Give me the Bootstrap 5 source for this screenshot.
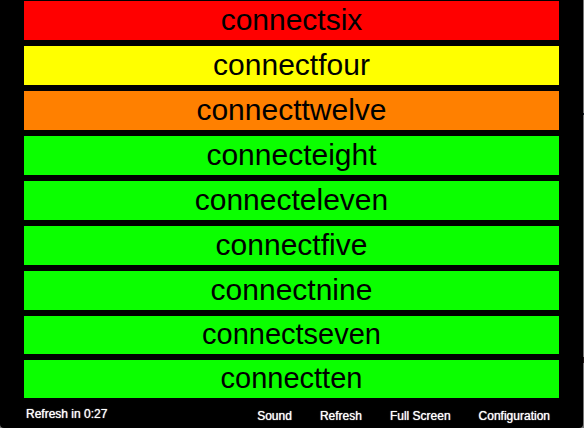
<!DOCTYPE html>
<html lang="en">
<head>
<meta charset="utf-8">
<meta name="viewport" content="width=device-width, initial-scale=1">
<title>Build monitor</title>
<link href="https://cdn.jsdelivr.net/npm/bootstrap@5.3.0/dist/css/bootstrap.min.css" rel="stylesheet">
<style>
  body {
    font-family: "Liberation Sans", Arial, Helvetica, sans-serif;
    background: linear-gradient(#777 113px, #101820 113px, #101820 115px, #777 115px, #777 357px, #201818 357px, #201818 363px, #777 363px);
    min-height: 100vh;
    padding-right: 1px;
  }
  .monitor {
    background: #000;
    min-height: 100vh;
    padding: 1px 24px 0;
    border-radius: 0 0 4px 4px;
  }
  .builds {
    display: grid;
    grid-template-rows: repeat(7, 39px) repeat(2, 38px);
    gap: 6px;
  }
  .builds li {
    font-size: 30px;
    line-height: 37px;
    color: #000;
    background: #0bff00;
  }
  .builds li:nth-child(n+8) { font-size: 29px; }
  .builds .failed { background: #f00; }
  .builds .unstable { background: #ff0; }
  .builds .building { background: #ff8000; }
  .toolbar {
    font-size: 12px;
    line-height: 16px;
    padding: 8px 9px 0 2px;
    text-shadow: 0 0 1px #fff;
  }
  .actions { gap: 28px; padding-top: 2px; }
</style>
<script src="https://cdn.jsdelivr.net/npm/bootstrap@5.3.0/dist/js/bootstrap.bundle.min.js" defer></script>
</head>
<body>
<main class="monitor">
  <ul class="builds list-unstyled text-center mb-0">
    <li class="failed">connectsix</li>
    <li class="unstable">connectfour</li>
    <li class="building">connecttwelve</li>
    <li>connecteight</li>
    <li>connecteleven</li>
    <li>connectfive</li>
    <li>connectnine</li>
    <li>connectseven</li>
    <li>connectten</li>
  </ul>
  <footer class="toolbar d-flex justify-content-between align-items-start text-white">
    <span>Refresh in 0:27</span>
    <nav class="actions d-flex" aria-label="Monitor actions">
      <a href="#sound" class="text-white text-decoration-none">Sound</a>
      <a href="#refresh" class="text-white text-decoration-none">Refresh</a>
      <a href="#fullscreen" class="text-white text-decoration-none">Full Screen</a>
      <a href="#configuration" class="text-white text-decoration-none">Configuration</a>
    </nav>
  </footer>
</main>
</body>
</html>
